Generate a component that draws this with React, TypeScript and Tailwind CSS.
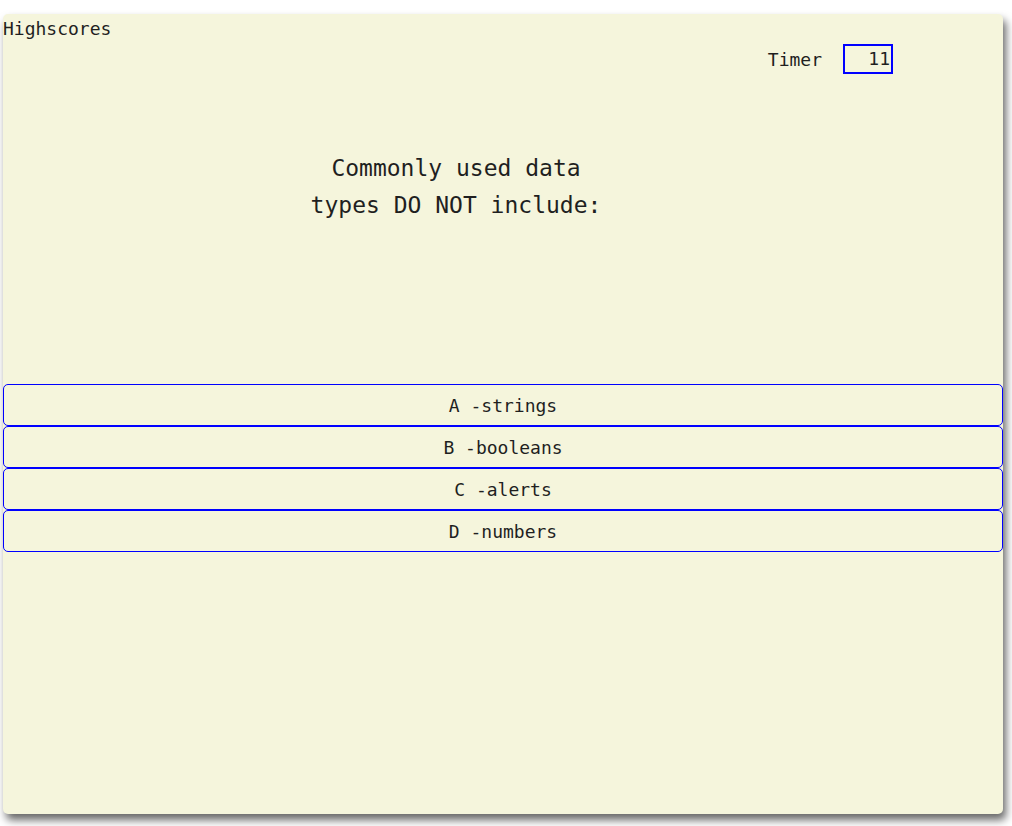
const answers = ["A -strings", "B -booleans", "C -alerts", "D -numbers"];

export default function App() {
  return (
    <div className="min-h-[826px] bg-white pl-[3px] pr-[9px] pt-[14px] pb-3 font-['DejaVu_Sans_Mono',monospace] text-[#1f1f1f]">
      {/* Quiz card */}
      <div className="flex h-[800px] flex-col rounded-[5px] bg-[#f5f5dc] shadow-[3px_6px_9px_rgba(0,0,0,0.6)]">
        <div className="flex items-start justify-between">
          <a className="pt-[4px] text-[18px] leading-[21px]">Highscores</a>
          <div className="mr-[110px] mt-[30px] flex items-center gap-[21px]">
            <span className="text-[18px]">Timer</span>
            <div className="h-[30px] w-[50px] border-2 border-[#0000ff] pr-[1px] text-right text-[18px] leading-[26px]">
              11
            </div>
          </div>
        </div>

        <div className="mt-[76px] flex h-[200px] justify-start pl-[300px]">
          <h2 className="w-[306px] text-center text-[23px] leading-[37px]">
            Commonly used data types DO NOT include:
          </h2>
        </div>

        <div className="mt-[34px] flex flex-col">
          {answers.map((answer) => (
            <button
              key={answer}
              className="h-[42px] rounded-[5px] border border-[#0000ff] bg-[#f5f5dc] text-center text-[18px]"
            >
              {answer}
            </button>
          ))}
        </div>
      </div>
    </div>
  );
}
